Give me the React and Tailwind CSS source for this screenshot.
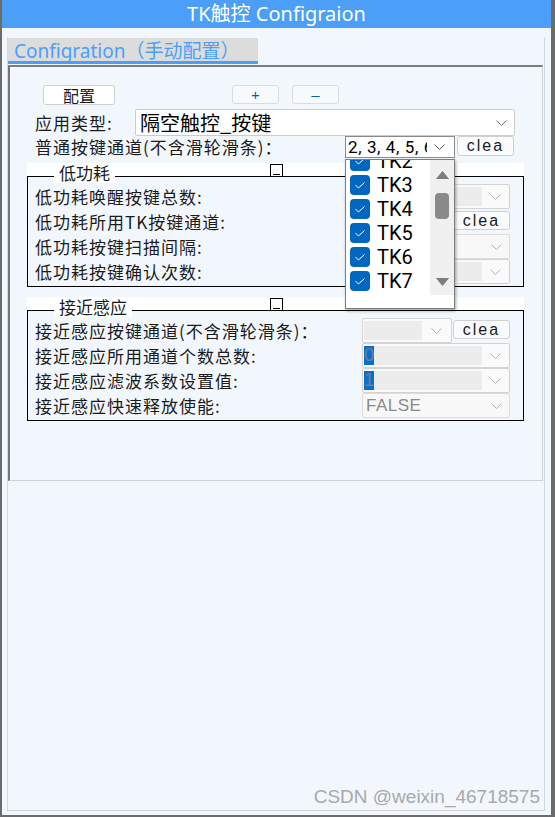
const cjk = "font-['Noto_Sans_CJK_SC',sans-serif]";
const label = "font-['Noto_Sans_CJK_SC',sans-serif] text-[17px] leading-[20px] tracking-[1px] text-[#1b1b1b] whitespace-nowrap";

function Chevron({ color = "#a8a8a8" }) {
  return (
    <svg width="11" height="6" viewBox="0 0 11 6">
      <polyline points="0.5,0.5 5.5,5.5 10.5,0.5" fill="none" stroke={color} strokeWidth="1" />
    </svg>
  );
}

function Clea({ cls }) {
  return (
    <div className={`flex items-center justify-center rounded-[3px] border border-[#cfcfcf] bg-[#f9fbfd] font-['Liberation_Sans',sans-serif] text-[16px] leading-[16px] tracking-[2px] text-[#1b1b1b] ${cls}`}>
      clea
    </div>
  );
}

function GraySelect({ hl }) {
  return (
    <div className="flex h-[25px] w-[148px] items-center rounded-[2px] border border-[#d3d3d3] bg-[#fafafa]">
      <div className="ml-[1px] flex h-[19px] w-[118px] items-center bg-[#ececec]">
        {hl && (
          <span className="flex h-[19px] w-[10px] items-center justify-center bg-[#0a6fcb] font-['Liberation_Sans',sans-serif] text-[18px] leading-[19px] text-[#6f7f95]">
            {hl}
          </span>
        )}
      </div>
      <div className="flex flex-1 justify-center">
        <Chevron color="#b4b4b4" />
      </div>
    </div>
  );
}

function PlainSelect({ text }) {
  return (
    <div className="flex h-[25px] w-[148px] items-center rounded-[2px] border border-[#dcdcdc] bg-[#f8f8f8]">
      <span className="ml-[3px] w-[117px] font-['Liberation_Sans',sans-serif] text-[17px] leading-[20px] tracking-[0.5px] text-[#8a8a8a]">
        {text}
      </span>
      <div className="flex flex-1 justify-center">
        <Chevron color="#b4b4b4" />
      </div>
    </div>
  );
}

function SmallSelectClea() {
  return (
    <div className="flex h-[25px] w-[148px] items-start">
      <div className="flex h-[25px] w-[90px] items-center rounded-[2px] border border-[#d3d3d3] bg-[#fafafa]">
        <div className="ml-[1px] h-[19px] w-[58px] bg-[#ececec]" />
        <div className="flex flex-1 justify-center">
          <Chevron color="#b4b4b4" />
        </div>
      </div>
      <Clea cls="ml-[1px] mt-[2px] h-[19px] w-[57px]" />
    </div>
  );
}

function FRow({ text, children }) {
  return (
    <div className="flex h-[25px] items-center justify-between">
      <span className={label}>{text}</span>
      {children}
    </div>
  );
}

function Group({ title, children, cls }) {
  return (
    <div className={`relative w-[497px] bg-[linear-gradient(to_bottom,#ffffff_13px,transparent_13px)] pt-[13px] ${cls}`}>
      <span className={`absolute left-[27px] top-0 bg-white px-[5px] ${cjk} text-[17px] leading-[20px] text-[#1b1b1b]`}>
        {title}
      </span>
      <div className="absolute left-[243px] top-[1px] flex h-[13px] w-[13px] items-end justify-center border border-black bg-white pb-[1px]">
        <div className="h-px w-[7px] bg-black" />
      </div>
      <div className="flex flex-col border border-black pb-[2px] pl-[7px] pr-[13px] pt-[7px]">{children}</div>
    </div>
  );
}

function CheckItem({ text, checked = true }) {
  return (
    <div className="flex h-[24px] items-center">
      {checked ? (
        <div className="flex h-[20px] w-[20px] items-center justify-center rounded-[4px] bg-[#0067c0]">
          <svg width="10" height="7" viewBox="0 0 10 7">
            <polyline points="0.5,3 3.5,6 9.5,0.5" fill="none" stroke="white" strokeWidth="1" />
          </svg>
        </div>
      ) : (
        <div className="h-[20px] w-[20px] rounded-[4px] border border-[#555555] bg-white" />
      )}
      <span className="ml-[7px] font-['Roboto',sans-serif] text-[20px] leading-[24px] text-black">{text}</span>
    </div>
  );
}

function Popup() {
  return (
    <div className="absolute left-[-1px] top-[22px] z-10 w-[110px] border border-[#7d7d7d] bg-white shadow-[1px_2px_3px_rgba(0,0,0,0.35)]">
      <div className="flex h-[135px]">
        <div className="h-[135px] w-[84px] overflow-hidden pl-[4px]">
          <div className="-mt-[11px] flex flex-col">
            <CheckItem text="TK2" />
            <CheckItem text="TK3" />
            <CheckItem text="TK4" />
            <CheckItem text="TK5" />
            <CheckItem text="TK6" />
            <CheckItem text="TK7" />
            <CheckItem text="TK8" checked={false} />
          </div>
        </div>
        <div className="flex h-[135px] w-[24px] flex-col items-center bg-[#f0f0f0] pt-[11px]">
          <svg width="13" height="8" viewBox="0 0 13 8">
            <polygon points="6.5,0.5 12.5,8 0.5,8" fill="#7d7d7d" stroke="#7d7d7d" strokeLinejoin="round" />
          </svg>
          <div className="mt-[14px] h-[26px] w-[14px] rounded-[4px] bg-[#8a8a8a]" />
          <div className="mt-[59px]">
            <svg width="13" height="8" viewBox="0 0 13 8">
              <polygon points="0.5,0 12.5,0 6.5,7.5" fill="#7d7d7d" stroke="#7d7d7d" strokeLinejoin="round" />
            </svg>
          </div>
        </div>
      </div>
      <div className="h-[13px]" />
    </div>
  );
}

export default function App() {
  return (
    <div className="flex h-[817px] w-[555px] flex-col border-b-2 border-l-2 border-r-4 border-[#6b6b6b] bg-[#f2f7fd]">
      <div className="flex h-[28px] items-center justify-center bg-[#4c9ff8] font-['Noto_Sans','Noto_Sans_CJK_SC',sans-serif] text-[20px] leading-[28px] text-white">
        TK触控 Configraion
      </div>
      <div className="flex flex-1 flex-col pb-[4px] pl-[5px] pr-[6px] pt-[9px]">
        <div className="flex flex-1 flex-col border-b border-l border-r border-[#d6d6d6]">
          <div className="mt-[1px] flex h-[26px] w-[250px] items-end border-b-[3px] border-[#4c9ff8] bg-[#dcdcdc] pl-[6px] font-['Noto_Sans','Noto_Sans_CJK_SC',sans-serif] text-[19px] leading-[23px] text-[#4c9ff8]">
            <span className="relative top-[2px]">Configration（手动配置）</span>
          </div>
          <div className="mt-[1px] flex h-[416px] w-[535px] flex-col border-b border-l-2 border-r border-t-2 border-b-[#d0d0d0] border-l-[#757575] border-r-[#d0d0d0] border-t-[#7d7d7d] pl-[17px] pt-[18px]">
            <div className="flex h-[24px] items-start">
              <div className={`ml-[16px] flex h-[20px] w-[72px] items-center justify-center rounded-[3px] border border-[#cfcfcf] bg-white ${cjk} text-[16px] leading-[18px] text-[#1b1b1b]`}>
                配置
              </div>
              <div className="ml-[117px] flex h-[19px] w-[47px] items-center justify-center rounded-[3px] border border-[#dcdcdc] bg-[#f7fafd] font-['Liberation_Sans',sans-serif] text-[15px] leading-[15px] text-[#0060c0]">
                +
              </div>
              <div className="ml-[13px] flex h-[19px] w-[47px] items-center justify-center rounded-[3px] border border-[#dcdcdc] bg-[#f7fafd] font-['Liberation_Sans',sans-serif] text-[15px] leading-[15px] text-[#0060c0]">
                –
              </div>
            </div>
            <div className="flex h-[27px] items-center">
              <span className={`w-[108px] pl-[8px] ${label}`}>应用类型:</span>
              <div className="flex h-[27px] w-[380px] items-center justify-between rounded-[2px] border border-[#cccccc] bg-white pl-[4px] pr-[7px]">
                <span className={`${cjk} text-[20px] leading-[24px] text-black`}>隔空触控_按键</span>
                <Chevron color="#6a6a6a" />
              </div>
            </div>
            <div className="flex h-[22px] items-start">
              <span className={`w-[318px] pl-[8px] ${label} leading-[22px]`}>普通按键通道(不含滑轮滑条)：</span>
              <div className="relative flex h-[22px] w-[110px] items-center border border-[#8a8a8a] bg-white">
                <span className="ml-[2px] w-[79px] overflow-hidden whitespace-nowrap font-['Roboto',sans-serif] text-[17px] leading-[20px] tracking-[0.6px] text-black">
                  2, 3, 4, 5, 6
                </span>
                <div className="ml-[7px]">
                  <Chevron color="#555555" />
                </div>
                <Popup />
              </div>
              <Clea cls="ml-[2px] h-[20px] w-[57px]" />
            </div>

            <Group title="低功耗" cls="mt-[5px]">
              <FRow text="低功耗唤醒按键总数:">
                <GraySelect />
              </FRow>
              <FRow text="低功耗所用TK按键通道:">
                <SmallSelectClea />
              </FRow>
              <FRow text="低功耗按键扫描间隔:">
                <PlainSelect text="" />
              </FRow>
              <FRow text="低功耗按键确认次数:">
                <GraySelect />
              </FRow>
            </Group>

            <Group title="接近感应" cls="mt-[10px]">
              <FRow text="接近感应按键通道(不含滑轮滑条)：">
                <SmallSelectClea />
              </FRow>
              <FRow text="接近感应所用通道个数总数:">
                <GraySelect hl="0" />
              </FRow>
              <FRow text="接近感应滤波系数设置值:">
                <GraySelect hl="1" />
              </FRow>
              <FRow text="接近感应快速释放使能:">
                <PlainSelect text="FALSE" />
              </FRow>
            </Group>
          </div>
          <div className="flex flex-1 items-end justify-end pb-[2px] pr-[4px]">
            <span className="font-['Liberation_Sans',sans-serif] text-[19px] leading-[22px] text-[#a9a9a9]">
              CSDN @weixin_46718575
            </span>
          </div>
        </div>
      </div>
    </div>
  );
}
